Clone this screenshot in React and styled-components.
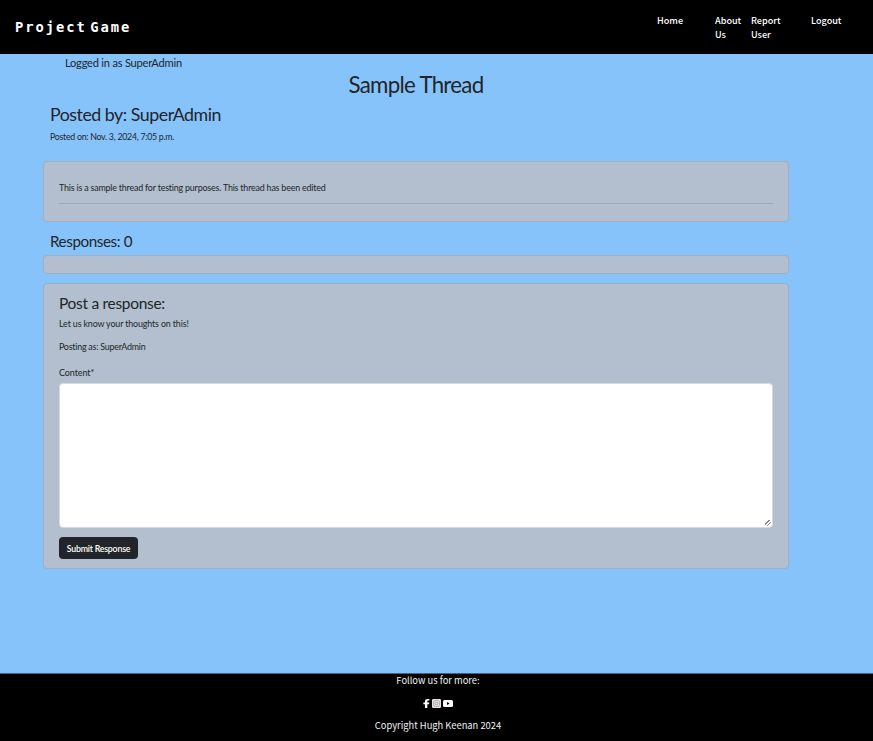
import React from 'react';
import styled, { createGlobalStyle } from 'styled-components';

const GlobalStyle = createGlobalStyle`
  *, *::before, *::after { box-sizing: border-box; }
  body {
    margin: 0;
    background: #87c3fb;
    color: #212529;
    font-family: Lato, "Open Sans", sans-serif;
  }
  h1, h2, h3, p { margin: 0; font-weight: 400; white-space: nowrap; }
`;

const Page = styled.div`
  display: flex;
  flex-direction: column;
  height: 741px;
  overflow: hidden;
`;

const Header = styled.header`
  display: flex;
  justify-content: space-between;
  flex: none;
  height: 54px;
  padding: 0 32px 0 15px;
  background: #000;
  color: #fff;
`;

const Brand = styled.a`
  font: bold 13.8px/54px "DejaVu Sans Mono", monospace;
  letter-spacing: 1.95px;
  word-spacing: -6.8px;
`;

const Nav = styled.nav`
  display: grid;
  grid-template-columns: 58px 36px 60px 30px;
  padding-top: 13px;
  font: 500 9.1px/14px "Noto Sans CJK KR", "Noto Sans", sans-serif;
`;

const NavLink = styled.a`
  width: min-content;
`;

const Main = styled.main`
  flex: 1;
  width: 746px;
  margin-left: 43px;
`;

const LoginStatus = styled.p`
  padding-left: 22px;
  font-size: 11.1px;
  line-height: 18px;
  letter-spacing: -0.22px;
`;

const Title = styled.h1`
  text-align: center;
  font-size: 22.3px;
  line-height: 26px;
  letter-spacing: -0.72px;
`;

const Author = styled.h2`
  padding: 4px 7px 0;
  font-size: 17.8px;
  line-height: 24px;
  letter-spacing: -0.48px;
`;

const PostedOn = styled.p`
  height: 35px;
  padding: 3px 7px 0;
  font-size: 8.8px;
  line-height: 15px;
  letter-spacing: -0.27px;
`;

const Card = styled.section`
  height: ${({ $height }) => $height}px;
  padding: 0 15px;
  border: 1px solid #a2afbe;
  border-radius: 4px;
  background: #b3bfce;
`;

const ThreadText = styled.p`
  height: 42px;
  padding-top: 18px;
  border-bottom: 1px solid #9eacba;
  font-size: 8.9px;
  line-height: 15px;
  letter-spacing: -0.18px;
`;

const ResponseCount = styled.h3`
  height: 33px;
  padding: 9px 7px 0;
  font-size: 15.2px;
  line-height: 20px;
  letter-spacing: -0.4px;
`;

const ResponseCard = styled(Card)`
  margin-top: 9px;
`;

const FormTitle = styled.h3`
  padding-top: 9px;
  font-size: 15.5px;
  line-height: 20px;
  letter-spacing: -0.3px;
`;

const FormText = styled.p`
  margin-top: ${({ $gap }) => $gap}px;
  font-size: 8.9px;
  line-height: 14px;
  letter-spacing: ${({ $tracking }) => $tracking}px;
`;

const FieldLabel = styled.label`
  display: block;
  margin-top: 12px;
  font-size: 9px;
  line-height: 14px;
  letter-spacing: -0.1px;
`;

const ContentField = styled.textarea`
  display: block;
  width: 714px;
  height: 145px;
  margin-top: 3px;
  border: 1px solid #d3dae2;
  border-radius: 4px;
  background: #fff;
  resize: vertical;

  &::-webkit-resizer {
    background: linear-gradient(135deg, transparent 30%, #888 30% 45%, transparent 45% 60%, #888 60% 75%, transparent 75%)
      right 1px bottom 1px / 6px 6px no-repeat;
  }
`;

const SubmitButton = styled.button`
  display: block;
  width: 79px;
  height: 22px;
  margin-top: 9px;
  padding: 1px 0 0;
  border: 0;
  border-radius: 4px;
  background: #212529;
  color: #fff;
  font: 600 8.8px/21px Lato, sans-serif;
  letter-spacing: -0.22px;
  white-space: nowrap;
`;

const Footer = styled.footer`
  display: flex;
  flex-direction: column;
  align-items: center;
  flex: none;
  height: 68px;
  padding-left: 3px;
  border-top: 1px solid #44627e;
  background: #000;
  color: #f2f2f2;
  font: 9.35px/14px "Noto Sans CJK KR", "Noto Sans", sans-serif;

  p { margin-top: -1px; }
`;

const SocialLinks = styled.div`
  display: flex;
  align-items: center;
  gap: 2px;
  height: 14px;
  margin: 9px 0;
`;

const SocialIcon = styled.svg`
  display: block;
  width: ${({ $width }) => $width}px;
  height: 9px;
`;

export default function App() {
  return (
    <>
      <GlobalStyle />
      <Page>
        <Header>
          <Brand>Project Game</Brand>
          <Nav>
            <NavLink>Home</NavLink>
            <NavLink>About Us</NavLink>
            <NavLink>Report User</NavLink>
            <NavLink>Logout</NavLink>
          </Nav>
        </Header>
        <Main>
          <LoginStatus>Logged in as SuperAdmin</LoginStatus>
          <Title>Sample Thread</Title>
          <Author>Posted by: SuperAdmin</Author>
          <PostedOn>Posted on: Nov. 3, 2024, 7:05 p.m.</PostedOn>
          <Card $height={61}>
            <ThreadText>
              This is a sample thread for testing purposes. This thread has been edited
            </ThreadText>
          </Card>
          <ResponseCount>Responses: 0</ResponseCount>
          <Card $height={19} />
          <ResponseCard $height={286}>
            <FormTitle>Post a response:</FormTitle>
            <FormText $gap={4} $tracking={-0.13}>Let us know your thoughts on this!</FormText>
            <FormText $gap={9} $tracking={-0.22}>Posting as: SuperAdmin</FormText>
            <FieldLabel htmlFor="content">Content*</FieldLabel>
            <ContentField id="content" />
            <SubmitButton>Submit Response</SubmitButton>
          </ResponseCard>
        </Main>
        <Footer>
          <p>Follow us for more:</p>
          <SocialLinks>
            <SocialIcon $width={7} viewBox="0 0 6 9" preserveAspectRatio="none" aria-label="Facebook">
              <path fill="#fff" d="M1.7 9V5.3H.3V3.6h1.4V2.3C1.7.8 2.6 0 4 0l1.5.1v1.5h-.8c-.8 0-1 .4-1 .9v1.1h1.7l-.3 1.7H3.7V9z" />
            </SocialIcon>
            <SocialIcon $width={9} viewBox="0 0 9 9" aria-label="Instagram">
              <rect width="9" height="9" rx="1.2" fill="#e5e1e5" />
              <rect x="1.5" y="1.5" width="6" height="6" rx="1.6" fill="none" stroke="#a79ca7" strokeWidth=".7" />
              <circle cx="4.5" cy="4.5" r="1.4" fill="none" stroke="#a79ca7" strokeWidth=".8" />
            </SocialIcon>
            <SocialIcon $width={10} viewBox="0 0 10 9" aria-label="YouTube">
              <rect y="1" width="10" height="7" rx="1.5" fill="#fff" />
              <path fill="#000" d="M4 3v3l2.6-1.5z" />
            </SocialIcon>
          </SocialLinks>
          <p>Copyright Hugh Keenan 2024</p>
        </Footer>
      </Page>
    </>
  );
}
